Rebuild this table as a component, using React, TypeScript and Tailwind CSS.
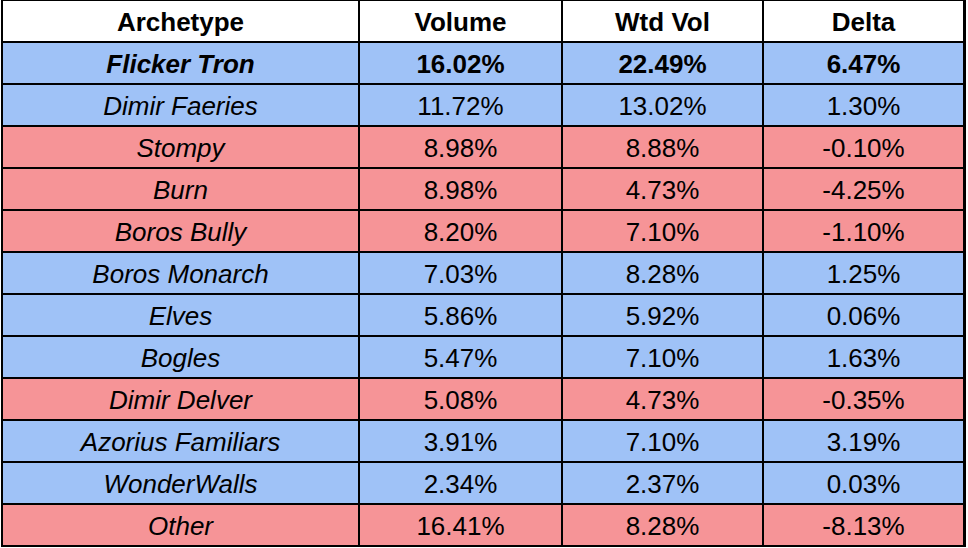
type Row = {
  name: string;
  volume: string;
  wtd: string;
  delta: string;
  up: boolean;
  bold?: boolean;
};

const rows: Row[] = [
  { name: "Flicker Tron", volume: "16.02%", wtd: "22.49%", delta: "6.47%", up: true, bold: true },
  { name: "Dimir Faeries", volume: "11.72%", wtd: "13.02%", delta: "1.30%", up: true },
  { name: "Stompy", volume: "8.98%", wtd: "8.88%", delta: "-0.10%", up: false },
  { name: "Burn", volume: "8.98%", wtd: "4.73%", delta: "-4.25%", up: false },
  { name: "Boros Bully", volume: "8.20%", wtd: "7.10%", delta: "-1.10%", up: false },
  { name: "Boros Monarch", volume: "7.03%", wtd: "8.28%", delta: "1.25%", up: true },
  { name: "Elves", volume: "5.86%", wtd: "5.92%", delta: "0.06%", up: true },
  { name: "Bogles", volume: "5.47%", wtd: "7.10%", delta: "1.63%", up: true },
  { name: "Dimir Delver", volume: "5.08%", wtd: "4.73%", delta: "-0.35%", up: false },
  { name: "Azorius Familiars", volume: "3.91%", wtd: "7.10%", delta: "3.19%", up: true },
  { name: "WonderWalls", volume: "2.34%", wtd: "2.37%", delta: "0.03%", up: true },
  { name: "Other", volume: "16.41%", wtd: "8.28%", delta: "-8.13%", up: false },
];

function Cell({ children, className = "" }: { children: React.ReactNode; className?: string }) {
  return <div className={`flex h-[40px] items-center justify-center pt-[2px] ${className}`}>{children}</div>;
}

export default function App() {
  return (
    <div className="h-[548px] w-[968px] bg-white pl-[1px] font-['Liberation_Sans',Arial,sans-serif] text-[26px] leading-none text-black">
      <div className="grid w-[965px] grid-cols-[355px_201px_199px_199px] gap-[2px] bg-black px-[2px] pt-[1px] pb-[2px]">
        <Cell className="bg-white font-bold">Archetype</Cell>
        <Cell className="bg-white font-bold">Volume</Cell>
        <Cell className="bg-white font-bold">Wtd Vol</Cell>
        <Cell className="bg-white font-bold">Delta</Cell>
        {rows.map((r) => {
          const bg = r.up ? "bg-[#9fc2f7]" : "bg-[#f69497]";
          const weight = r.bold ? "font-bold" : "";
          return [
            <Cell key={r.name + "n"} className={`${bg} ${weight} italic`}>{r.name}</Cell>,
            <Cell key={r.name + "v"} className={`${bg} ${weight}`}>{r.volume}</Cell>,
            <Cell key={r.name + "w"} className={`${bg} ${weight}`}>{r.wtd}</Cell>,
            <Cell key={r.name + "d"} className={`${bg} ${weight}`}>{r.delta}</Cell>,
          ];
        })}
      </div>
    </div>
  );
}
